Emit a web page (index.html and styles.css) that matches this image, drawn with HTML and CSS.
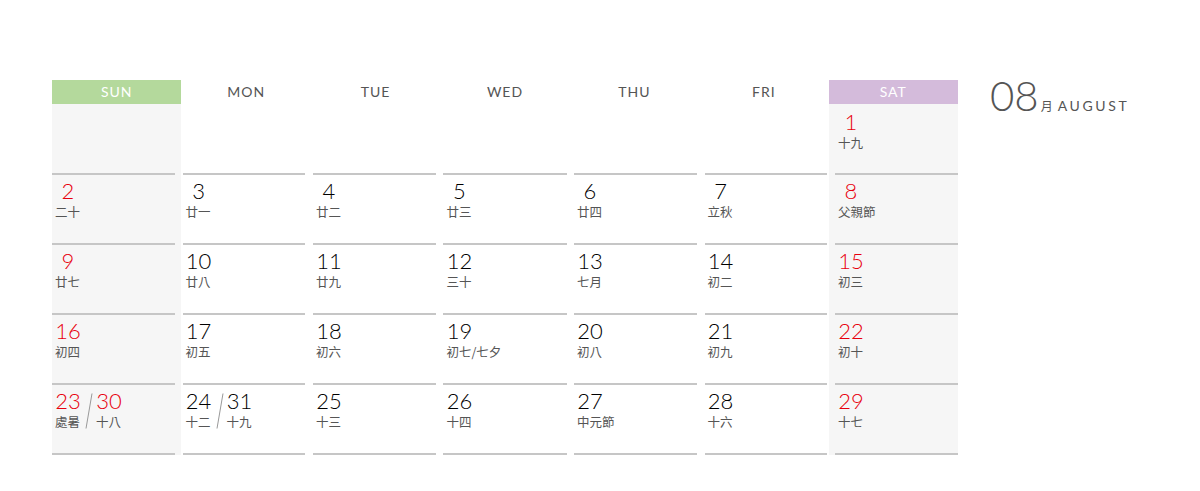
FILE: index.html
```html
<!DOCTYPE html>
<html>
<head>
	<meta charset="utf-8">
	<meta name="viewport" content="width=device-width, initial-scale=1">
	<title>August</title>
	<link rel="stylesheet" href="styles.css">
</head>
<body>
<div class="page">

<div class="cal">
	<div class="head">
		<div class="sun">SUN</div>
		<div>MON</div>
		<div>TUE</div>
		<div>WED</div>
		<div>THU</div>
		<div>FRI</div>
		<div class="sat">SAT</div>
	</div>

	<div class="grid">
		<!-- week 1 -->
		<div class="day sun"><div class="box"></div></div>
		<div class="day"><div class="box"></div></div>
		<div class="day"><div class="box"></div></div>
		<div class="day"><div class="box"></div></div>
		<div class="day"><div class="box"></div></div>
		<div class="day"><div class="box"></div></div>
		<div class="day sat"><div class="box"><span class="num red">1</span><span class="lunar">十九</span></div></div>

		<!-- week 2 -->
		<div class="day sun"><div class="box"><span class="num red">2</span><span class="lunar">二十</span></div></div>
		<div class="day"><div class="box"><span class="num">3</span><span class="lunar">廿一</span></div></div>
		<div class="day"><div class="box"><span class="num">4</span><span class="lunar">廿二</span></div></div>
		<div class="day"><div class="box"><span class="num">5</span><span class="lunar">廿三</span></div></div>
		<div class="day"><div class="box"><span class="num">6</span><span class="lunar">廿四</span></div></div>
		<div class="day"><div class="box"><span class="num">7</span><span class="lunar">立秋</span></div></div>
		<div class="day sat"><div class="box"><span class="num red">8</span><span class="lunar">父親節</span></div></div>

		<!-- week 3 -->
		<div class="day sun"><div class="box"><span class="num red">9</span><span class="lunar">廿七</span></div></div>
		<div class="day"><div class="box"><span class="num">10</span><span class="lunar">廿八</span></div></div>
		<div class="day"><div class="box"><span class="num">11</span><span class="lunar">廿九</span></div></div>
		<div class="day"><div class="box"><span class="num">12</span><span class="lunar">三十</span></div></div>
		<div class="day"><div class="box"><span class="num">13</span><span class="lunar">七月</span></div></div>
		<div class="day"><div class="box"><span class="num">14</span><span class="lunar">初二</span></div></div>
		<div class="day sat"><div class="box"><span class="num red">15</span><span class="lunar">初三</span></div></div>

		<!-- week 4 -->
		<div class="day sun"><div class="box"><span class="num red">16</span><span class="lunar">初四</span></div></div>
		<div class="day"><div class="box"><span class="num">17</span><span class="lunar">初五</span></div></div>
		<div class="day"><div class="box"><span class="num">18</span><span class="lunar">初六</span></div></div>
		<div class="day"><div class="box"><span class="num">19</span><span class="lunar">初七/七夕</span></div></div>
		<div class="day"><div class="box"><span class="num">20</span><span class="lunar">初八</span></div></div>
		<div class="day"><div class="box"><span class="num">21</span><span class="lunar">初九</span></div></div>
		<div class="day sat"><div class="box"><span class="num red">22</span><span class="lunar">初十</span></div></div>

		<!-- week 5 -->
		<div class="day sun"><div class="box split">
			<div class="part"><span class="num red">23</span><span class="lunar">處暑</span></div>
			<svg class="slash" width="8" height="36" viewBox="0 0 8 36"><line x1="7" y1="0.5" x2="1" y2="35.5" stroke="#999" stroke-width="1"/></svg>
			<div class="part"><span class="num red">30</span><span class="lunar">十八</span></div>
		</div></div>
		<div class="day"><div class="box split">
			<div class="part"><span class="num">24</span><span class="lunar">十二</span></div>
			<svg class="slash" width="8" height="36" viewBox="0 0 8 36"><line x1="7" y1="0.5" x2="1" y2="35.5" stroke="#999" stroke-width="1"/></svg>
			<div class="part"><span class="num">31</span><span class="lunar">十九</span></div>
		</div></div>
		<div class="day"><div class="box"><span class="num">25</span><span class="lunar">十三</span></div></div>
		<div class="day"><div class="box"><span class="num">26</span><span class="lunar">十四</span></div></div>
		<div class="day"><div class="box"><span class="num">27</span><span class="lunar">中元節</span></div></div>
		<div class="day"><div class="box"><span class="num">28</span><span class="lunar">十六</span></div></div>
		<div class="day sat"><div class="box"><span class="num red">29</span><span class="lunar">十七</span></div></div>
	</div>
</div>

<div class="title">
	<span class="month">08</span>
	<span class="yue">月</span>
	<span class="en">AUGUST</span>
</div>

</div>
</body>
</html>
```

FILE: styles.css
```css
html, *, *::before,
*::after{
	box-sizing: border-box;
}
body{
	margin: 0;
	background: #fff;
	font-family: Lato, "Noto Sans CJK TC", sans-serif;
	overflow: hidden;
}
.page{
	display: flex;
	align-items: flex-start;
	padding: 80px 0 0 52px;
}
.cal{
	width: 906px;
}
.head{
	display: grid;
	grid-template-columns: repeat(7, 1fr);
	height: 24px;
}
.head div{
	text-align: center;
	line-height: 24px;
	font-size: 14px;
	letter-spacing: 1px;
	color: #555;
}
.head .sun{
	background: #b4d99c;
	color: #fff;
}
.head .sat{
	background: #d4bbdb;
	color: #fff;
}
.grid{
	display: grid;
	grid-template-columns: repeat(7, 1fr);
	grid-template-rows: 69px 70px 70px 70px 72px;
}
.day.sun, .day.sat{
	background: #f6f6f6;
}
.box{
	height: 100%;
	border-top: 2px solid #c6c6c6;
	padding: 4px 0 0 3px;
}
.grid .day:nth-child(-n+7) .box{
	border-top-color: transparent;
}
.grid .day:nth-last-child(-n+7) .box{
	border-bottom: 2px solid #c6c6c6;
}
/* lines sit on a grid with gaps, the shading on one without */
.grid .day:nth-child(7n+1) .box{ margin: 0 6.4px 0 0; }
.grid .day:nth-child(7n+2) .box{ margin: 0 5.4px 0 1.1px; }
.grid .day:nth-child(7n+3) .box{ margin: 0 4.3px 0 2.1px; }
.grid .day:nth-child(7n+4) .box{ margin: 0 3.2px 0 3.2px; }
.grid .day:nth-child(7n+5) .box{ margin: 0 2.1px 0 4.3px; }
.grid .day:nth-child(7n+6) .box{ margin: 0 1.1px 0 5.4px; }
.grid .day:nth-child(7n+7) .box{ margin: 0 0 0 6.4px; }

.num{
	display: block;
	min-width: 26px;
	width: max-content;
	text-align: center;
	font-size: 22px;
	font-weight: 300;
	line-height: 24px;
	color: #000;
}
.num.red{
	color: #e8000d;
}
.lunar{
	display: block;
	font-family: "Noto Sans CJK TC", sans-serif;
	font-size: 12.5px;
	line-height: 14px;
	margin-top: 2px;
	color: #555;
}
.split{
	display: flex;
	align-items: flex-start;
}
.slash{
	margin: 4px 3px 0 4px;
}

.title{
	display: flex;
	align-items: baseline;
	margin: -6px 0 0 32px;
	color: #555;
}
.month{
	font-size: 42px;
	font-weight: 300;
	line-height: 42px;
}
.yue{
	font-family: "Noto Sans CJK TC", sans-serif;
	font-size: 12px;
	margin-left: 2px;
}
.en{
	font-size: 14px;
	letter-spacing: 2.6px;
	margin-left: 5px;
}
```
